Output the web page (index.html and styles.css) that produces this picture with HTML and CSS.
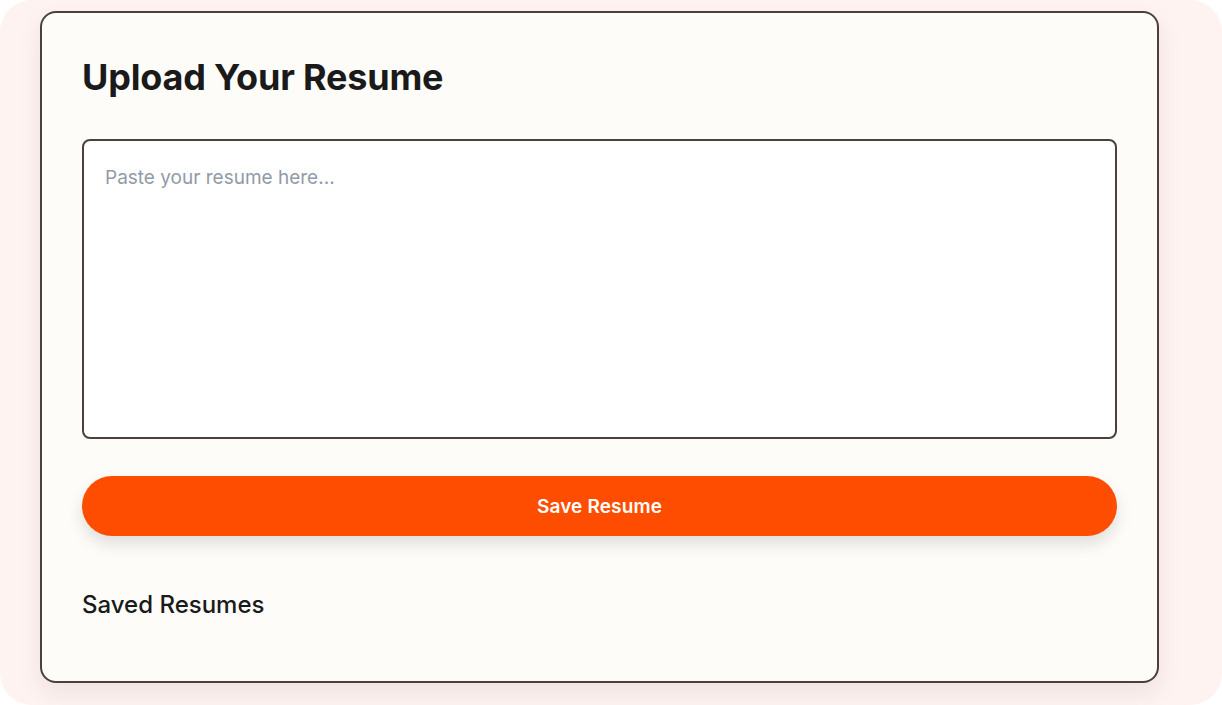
FILE: index.html
```html
<!DOCTYPE html>
<html>
<head>
<meta charset="utf-8">
<link rel="stylesheet" href="styles.css">
</head>
<body>
<div class="page">
  <div class="card">
    <h1 class="title">Upload Your Resume</h1>
    <textarea class="resume-input" placeholder="Paste your resume here..."></textarea>
    <button class="save-btn">Save Resume</button>
    <h2 class="subtitle">Saved Resumes</h2>
  </div>
</div>
</body>
</html>
```
FILE: styles.css
```css
html, body {
  margin: 0;
  padding: 0;
  background: #ffffff;
}
body {
  font-family: Inter, "Noto Sans", sans-serif;
  overflow: hidden;
}
.page {
  box-sizing: border-box;
  width: 1222px;
  height: 705px;
  background: #fef3f1;
  border-radius: 32px;
  padding: 11px 63px 0 40px;
}
.card {
  box-sizing: border-box;
  width: 1119px;
  height: 672px;
  background: #fdfcf8;
  border: 2px solid #4a413e;
  border-radius: 16px;
  padding: 40px;
  display: flex;
  flex-direction: column;
  box-shadow: 0 10px 25px rgba(60, 30, 20, 0.08);
}
.title {
  margin: 2px 0 0 0;
  font-size: 36px;
  line-height: 44px;
  font-weight: 700;
  color: #1a1a1a;
  letter-spacing: -0.2px;
}
.resume-input {
  box-sizing: border-box;
  margin-top: 40px;
  width: 100%;
  height: 300px;
  border: 2px solid #4a413e;
  border-radius: 8px;
  background: #ffffff;
  padding: 24px 21px;
  font-family: Inter, "Noto Sans", sans-serif;
  font-size: 19px;
  line-height: 26px;
  resize: none;
  outline: none;
}
.resume-input::placeholder {
  color: #929aa8;
}
.save-btn {
  margin-top: 37px;
  height: 60px;
  width: 100%;
  border: none;
  border-radius: 30px;
  background: #ff4d00;
  color: #ffffff;
  font-family: Inter, "Noto Sans", sans-serif;
  font-size: 19px;
  font-weight: 600;
  letter-spacing: 0.15px;
  box-shadow: 0 8px 16px rgba(0, 0, 0, 0.12);
}
.subtitle {
  margin: 55px 0 0 0;
  font-size: 24px;
  line-height: 28px;
  font-weight: 500;
  color: #1a1a1a;
}
```
